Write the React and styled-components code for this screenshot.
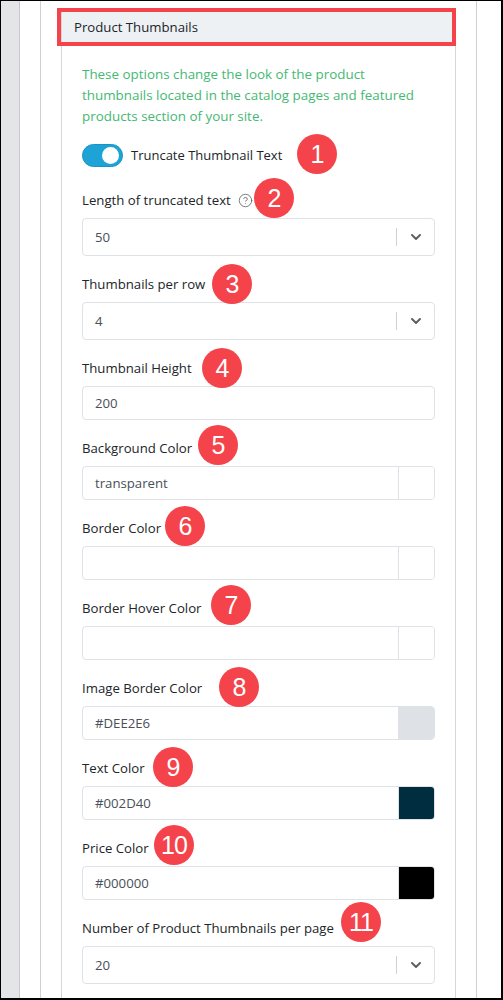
import React from "react";
import styled, { createGlobalStyle } from "styled-components";
import { ChevronDown, CircleHelp } from "lucide-react";

const Global = createGlobalStyle`
  html, body { margin: 0; padding: 0; background: #fff; overflow: hidden; }
  * { box-sizing: border-box; }
  body { font-family: "Open Sans", "Noto Sans", sans-serif; }
`;

const Frame = styled.div`
  width: 503px;
  height: 1000px;
  border: 1px solid #000;
  border-right-width: 2px;
  border-bottom-width: 2px;
  display: flex;
  overflow: hidden;
  background: #fff;
`;

const Sidebar = styled.div`
  width: 19px;
  flex: none;
  background: #e4e5e7;
  border-right: 1px solid #c8c9cd;
`;

const Main = styled.div`
  flex: 1;
  padding: 0 24px 0 20px;
  display: flex;
`;

const Column = styled.div`
  flex: 1;
  border-left: 1px solid #cdd0d4;
  border-right: 1px solid #cdd0d4;
  padding: 10px 20px 0;
`;

const Card = styled.div`
  border: 1px solid #d3d6da;
  border-bottom: none;
  height: 1200px;
`;

const Header = styled.div`
  position: relative;
  height: 30px;
  background: #eef1f4;
  padding-left: 12px;
  display: flex;
  align-items: center;
  font-size: 13.2px;
  color: #212529;
`;

const Highlight = styled.div`
  position: absolute;
  left: -5px;
  right: -1px;
  top: -4px;
  bottom: -4px;
  border: 4px solid #f4434a;
  pointer-events: none;
`;

const Body = styled.div`
  padding: 22px 20px 0;
  display: flex;
  flex-direction: column;
`;

const Description = styled.p`
  margin: 0 0 16px;
  padding-right: 14px;
  font-size: 13.4px;
  line-height: 21px;
  color: #45b873;
`;

const ToggleRow = styled.div`
  position: relative;
  display: flex;
  align-items: center;
  gap: 8px;
  height: 24px;
  margin-bottom: 23px;
  font-size: 13px;
  color: #212529;
`;

const Switch = styled.span`
  width: 41px;
  height: 23px;
  border-radius: 12px;
  background: #1ea3d7;
  border: 1px solid #1b93c4;
  display: flex;
  align-items: center;
  justify-content: flex-end;
  padding-right: 3px;
  &::after {
    content: "";
    width: 17px;
    height: 17px;
    border-radius: 50%;
    background: #fff;
  }
`;

const Field = styled.div`
  display: flex;
  flex-direction: column;
  gap: 8px;
  & + & { margin-top: 18px; }
`;

const LabelRow = styled.div`
  position: relative;
  display: flex;
  align-items: center;
  gap: 7px;
  height: 20px;
  font-size: 13.2px;
  color: #212529;
`;

const Badge = styled.span`
  position: absolute;
  top: 50%;
  width: 40px;
  height: 40px;
  margin-top: -20px;
  border-radius: 50%;
  background: #f4434a;
  color: #fff;
  font-family: "Liberation Sans", Arial, sans-serif;
  font-size: 25px;
  display: flex;
  align-items: center;
  justify-content: center;
  letter-spacing: -1px;
`;

const Control = styled.div`
  display: flex;
  align-items: stretch;
  height: ${(p) => (p.$select ? 38 : 34)}px;
  border: 1px solid #dee2e6;
  border-radius: 4px;
  overflow: hidden;
  background: #fff;
`;

const Value = styled.div`
  flex: 1;
  display: flex;
  align-items: center;
  padding-left: 12px;
  font-size: 13.2px;
  color: #495057;
`;

const Divider = styled.span`
  width: 1px;
  align-self: center;
  height: 18px;
  background: #cfd3d7;
`;

const Chevron = styled.span`
  width: 37px;
  display: flex;
  align-items: center;
  justify-content: center;
  color: #5b6168;
`;

const Swatch = styled.span`
  width: 36px;
  border-left: 1px solid #dee2e6;
  background: ${(p) => p.$color || "#fff"};
`;

const Help = styled(CircleHelp)`
  color: #5b6168;
`;

function Mark({ n, x, dy = 0 }) {
  return <Badge style={{ left: x, marginTop: -20 + dy }}>{n}</Badge>;
}

const fields = [
  { label: "Length of truncated text", help: true, type: "select", value: "50", n: 2, x: 172, dy: -2 },
  { label: "Thumbnails per row", type: "select", value: "4", n: 3, x: 130, dy: 0 },
  { label: "Thumbnail Height", type: "input", value: "200", n: 4, x: 120, dy: 0 },
  { label: "Background Color", type: "color", value: "transparent", n: 5, x: 116, dy: -3 },
  { label: "Border Color", type: "color", value: "", n: 6, x: 83, dy: -2 },
  { label: "Border Hover Color", type: "color", value: "", n: 7, x: 129, dy: -3 },
  { label: "Image Border Color", type: "color", value: "#DEE2E6", swatch: "#dee2e6", n: 8, x: 137, dy: -1 },
  { label: "Text Color", type: "color", value: "#002D40", swatch: "#002d40", n: 9, x: 71, dy: -1 },
  { label: "Price Color", type: "color", value: "#000000", swatch: "#000000", n: 10, x: 72, dy: -3 },
  { label: "Number of Product Thumbnails per page", type: "select", value: "20", n: 11, x: 259, dy: -6 },
];

export default function App() {
  return (
    <>
      <Global />
      <Frame>
        <Sidebar />
        <Main>
          <Column>
            <Card>
              <Header>
                Product Thumbnails
                <Highlight />
              </Header>
              <Body>
                <Description>
                  These options change the look of the product thumbnails located in the catalog pages and featured products section of your site.
                </Description>
                <ToggleRow>
                  <Switch />
                  Truncate Thumbnail Text
                  <Mark n={1} x={215} dy={-1} />
                </ToggleRow>
                {fields.map((f) => (
                  <Field key={f.n}>
                    <LabelRow>
                      {f.label}
                      {f.help && <Help size={15} strokeWidth={1.3} />}
                      <Mark n={f.n} x={f.x} dy={f.dy} />
                    </LabelRow>
                    <Control $select={f.type === "select"}>
                      <Value>{f.value}</Value>
                      {f.type === "select" && (
                        <>
                          <Divider />
                          <Chevron>
                            <ChevronDown size={16} strokeWidth={3} />
                          </Chevron>
                        </>
                      )}
                      {f.type === "color" && <Swatch $color={f.swatch} />}
                    </Control>
                  </Field>
                ))}
              </Body>
            </Card>
          </Column>
        </Main>
      </Frame>
    </>
  );
}
